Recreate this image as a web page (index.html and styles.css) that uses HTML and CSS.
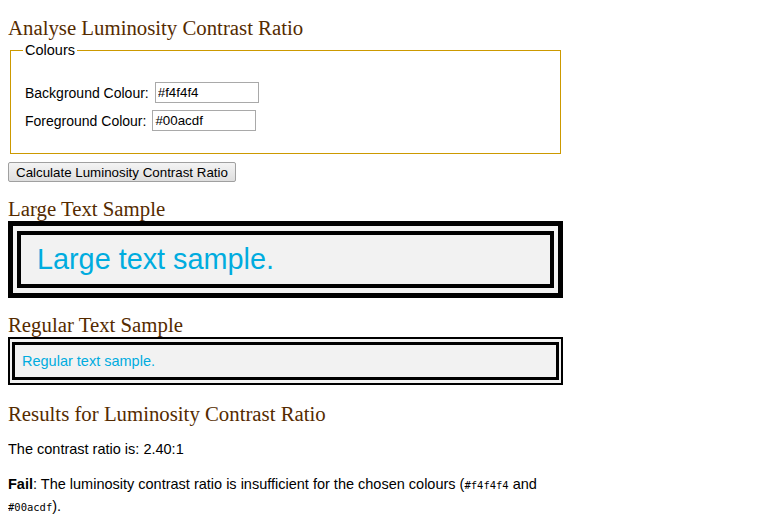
FILE: index.html
```html
<!DOCTYPE html>
<html lang="en">
<head>
    <meta charset="UTF-8">
    <meta name="viewport" content="width=device-width, initial-scale=1.0">
    <title>Luminosity Contrast Ratio</title>
    <link rel="stylesheet" href="styles.css">
</head>
<body>
    <div class="page">
        <h1 class="heading">Analyse Luminosity Contrast Ratio</h1>
        <form class="analyser" onsubmit="return false">
            <fieldset class="colours">
                <legend>Colours</legend>
                <div class="row">
                    <label for="bg">Background Colour:</label>
                    <input id="bg" class="hex" value="#f4f4f4">
                </div>
                <div class="row">
                    <label for="fg">Foreground Colour:</label>
                    <input id="fg" class="hex" value="#00acdf">
                </div>
            </fieldset>
            <button class="calc">Calculate Luminosity Contrast Ratio</button>
        </form>

        <h2 class="heading sub">Large Text Sample</h2>
        <div class="sample large-box">
            <div class="sample-inner large">Large text sample.</div>
        </div>

        <h2 class="heading sub">Regular Text Sample</h2>
        <div class="sample regular-box">
            <div class="sample-inner regular">Regular text sample.</div>
        </div>

        <h2 class="heading sub results">Results for Luminosity Contrast Ratio</h2>
        <p class="ratio">The contrast ratio is: 2.40:1</p>
        <p class="verdict"><strong>Fail</strong>: The luminosity contrast ratio is insufficient for the chosen colours (<code>#f4f4f4</code> and <code>#00acdf</code>).</p>
    </div>
</body>
</html>
```

FILE: styles.css
```css
body { margin: 8px; font-family: "Liberation Sans", Arial, sans-serif; font-size: 14px; color: #000; background: #fff; }
.page { width: 555px; }
.heading { font-family: "Liberation Serif", "Times New Roman", serif; font-weight: normal; font-size: 20.8px; line-height: 24px; color: #552b00; margin: 8px 0 0; }
.colours { border: 1px solid #cc9900; margin: 2px 2px 0; padding: 24px 14px 22px; }
.colours legend { padding: 0 2px; margin-left: -2px; font-size: 14.5px; }
.row { display: flex; align-items: center; gap: 6px; height: 21px; }
.row + .row { margin-top: 7px; }
.hex { width: 104px; height: 21px; box-sizing: border-box; border: 1px solid #a9a9a9; padding: 1px 2px; font-family: "Liberation Sans", Arial, sans-serif; font-size: 13.33px; }
.calc { margin-top: 8px; height: 20px; padding: 0 7px; font-family: "Liberation Sans", Arial, sans-serif; font-size: 13.33px; color: #000; border: 1px solid #a0a0a0; border-radius: 2px; background: linear-gradient(#f4f4f4, #dedede); }
.sub { margin-top: 15px; }
.sub.results { margin-top: 17px; }
.sample { background: #f2f2f2; }
.sample-inner { color: #00acdf; }
.large-box { border: 5px solid #000; padding: 5px 4px; }
.large-box .sample-inner { border: 4px solid #000; padding: 0 16px; font-size: 28.8px; line-height: 49px; }
.regular-box { border: 2px solid #000; padding: 3px 2px; }
.regular-box .sample-inner { border: 3px solid #000; padding: 0 7px; font-size: 14.5px; line-height: 32px; }
.ratio { margin: 13px 0 0; font-size: 14.5px; line-height: 20px; }
.verdict { margin: 15px 0 0; font-size: 14.5px; line-height: 21px; }
code { font-family: "DejaVu Sans Mono", monospace; font-size: 10.5px; }
```
